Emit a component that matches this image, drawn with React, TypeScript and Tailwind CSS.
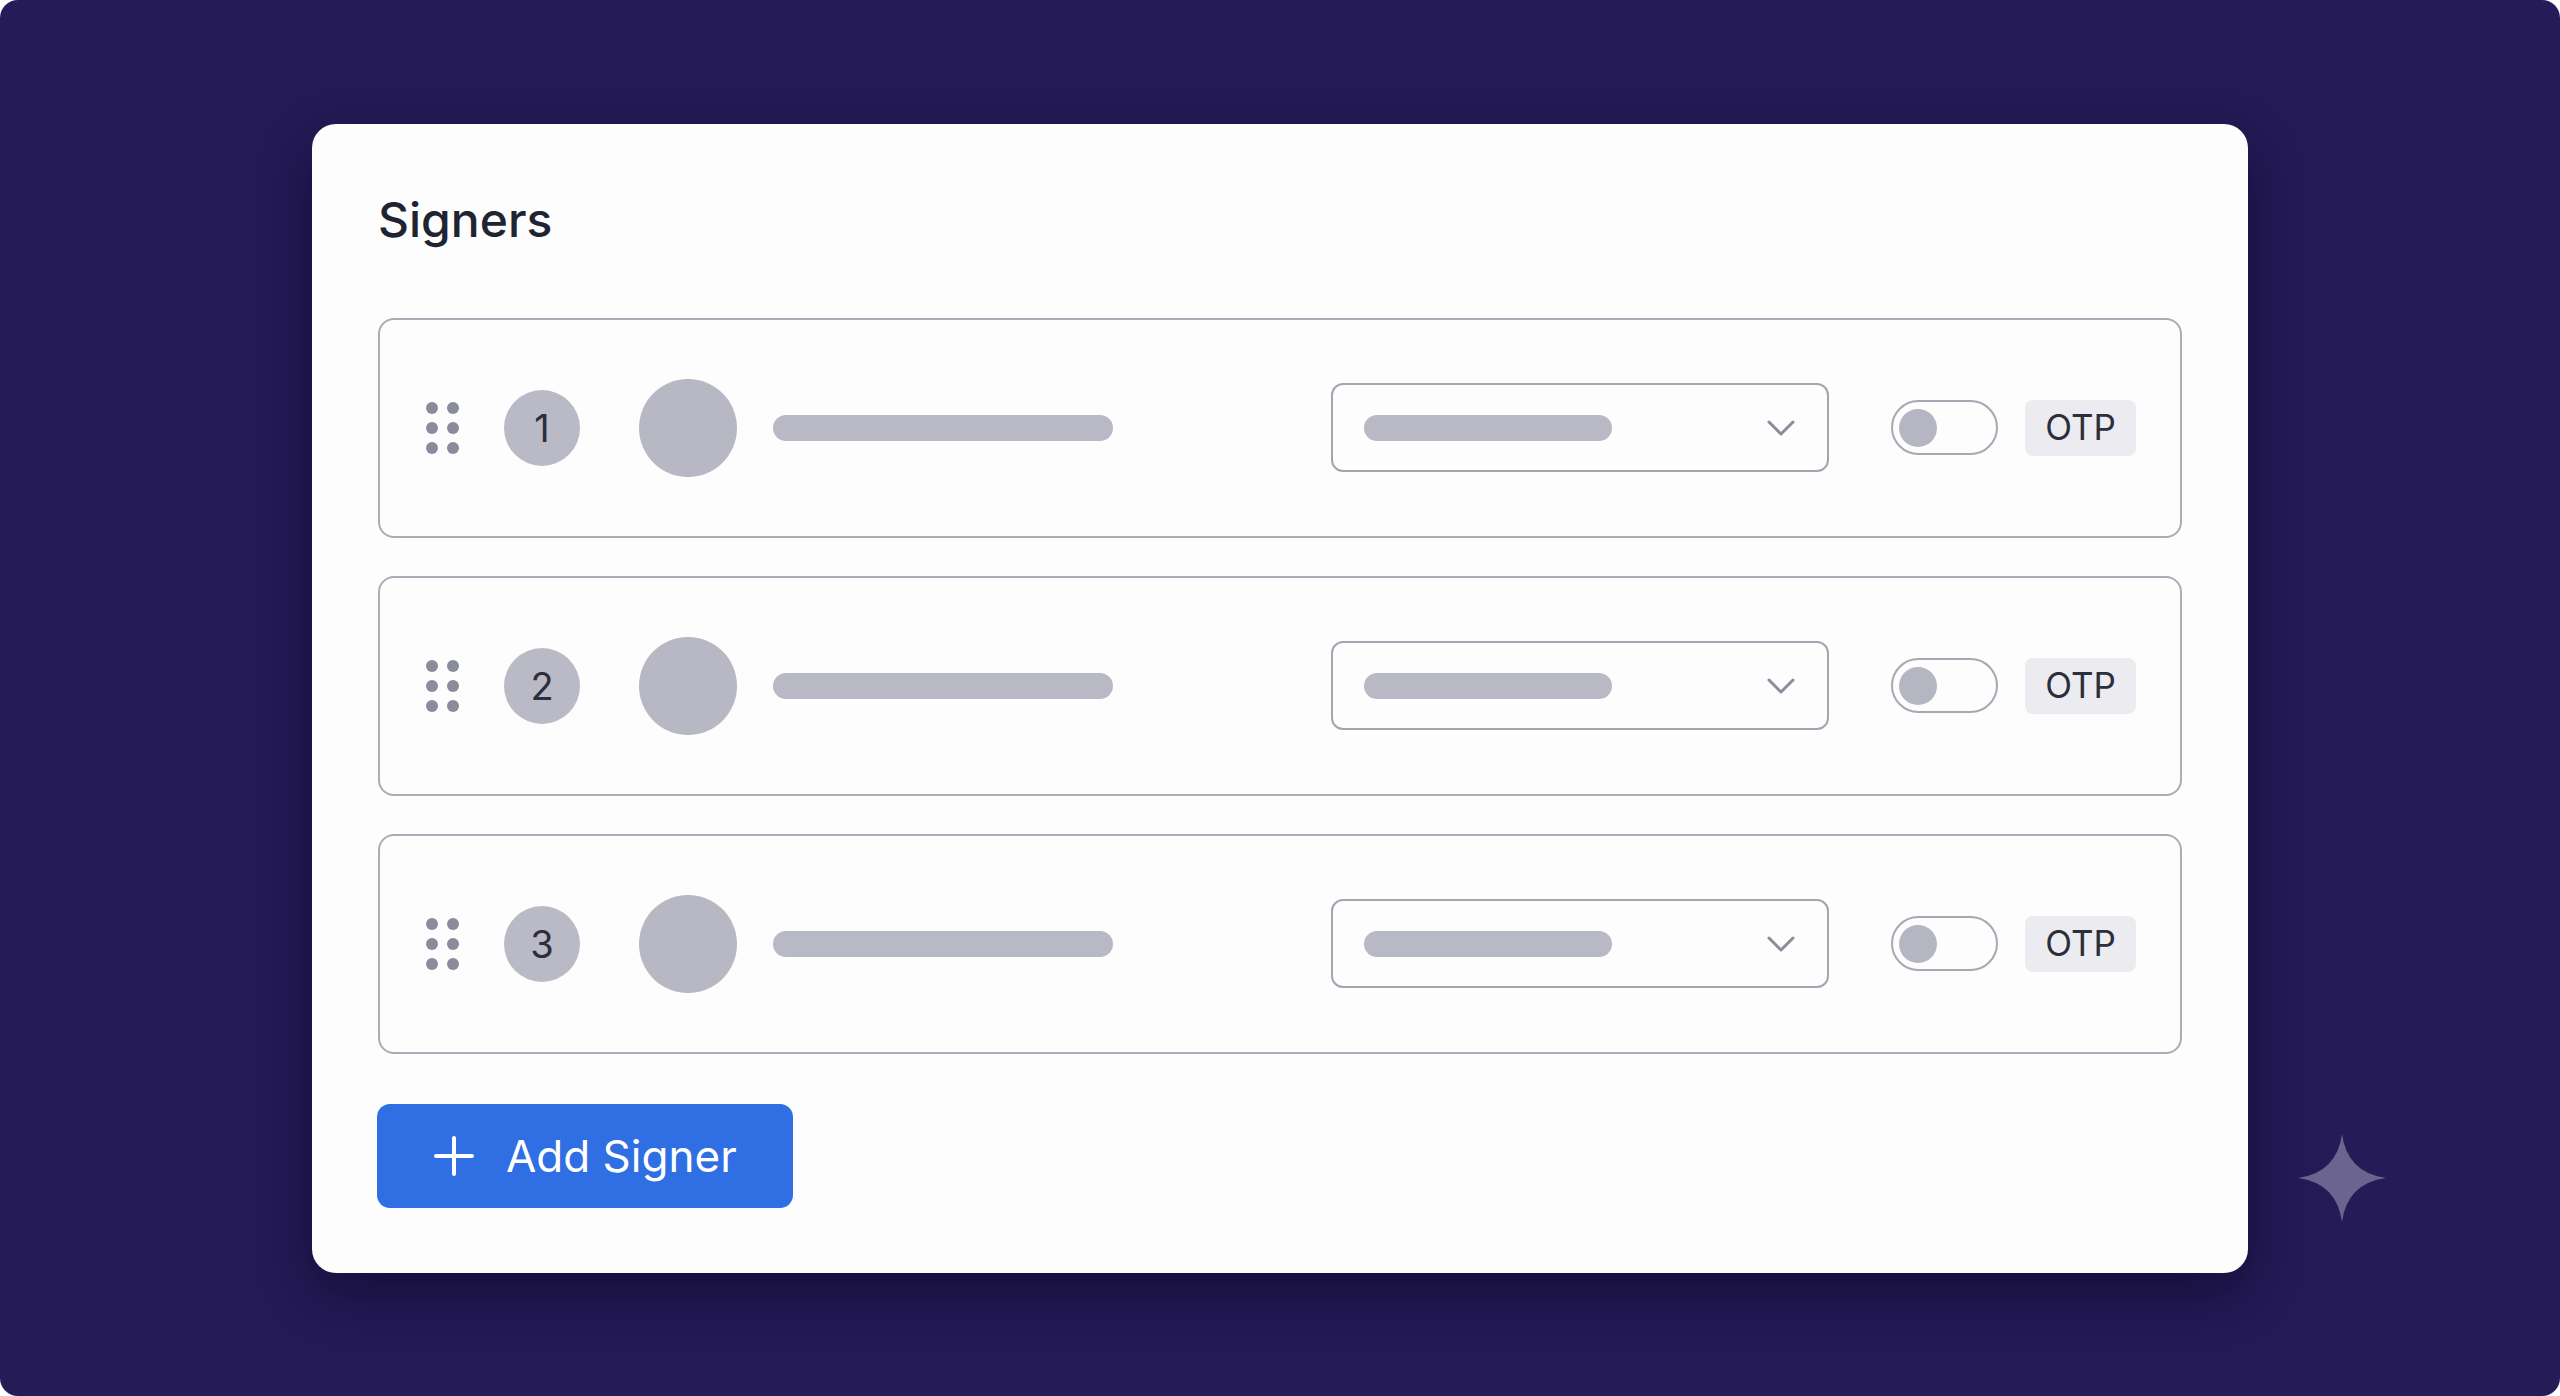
const signers = [1, 2, 3];

function DragHandle() {
  return (
    <div className="grid grid-cols-2 gap-x-[9px] gap-y-[8px]">
      {Array.from({ length: 6 }).map((_, i) => (
        <span key={i} className="w-[12px] h-[12px] rounded-full bg-[#8a8b9b]" />
      ))}
    </div>
  );
}

function SignerRow({ n }: { n: number }) {
  return (
    <div className="h-[220px] flex items-center justify-between pl-[46px] pr-[44px] border-2 border-[#aaacb7] rounded-[16px]">
      <div className="flex items-center">
        <DragHandle />
        {/* order number */}
        <div className="ml-[45px] w-[76px] h-[76px] rounded-full bg-[#b9bac6] flex items-center justify-center text-[38px] leading-none text-[#2b2e3c]">
          {n}
        </div>
        {/* avatar + name placeholder */}
        <div className="ml-[59px] w-[98px] h-[98px] rounded-full bg-[#b7b8c4]" />
        <div className="ml-[36px] w-[340px] h-[26px] rounded-full bg-[#b8b9c5]" />
      </div>
      <div className="flex items-center">
        {/* role select */}
        <div className="w-[498px] h-[89px] border-2 border-[#a3a5b0] rounded-[12px] flex items-center justify-between pl-[31px] pr-[32px]">
          <div className="w-[248px] h-[26px] rounded-full bg-[#b8b9c5]" />
          <svg width="28" height="16" viewBox="0 0 28 16" fill="none">
            <path d="M2 2 L14 14 L26 2" stroke="#8b8c99" strokeWidth="3" strokeLinecap="round" strokeLinejoin="round" />
          </svg>
        </div>
        {/* toggle */}
        <div className="ml-[62px] w-[107px] h-[55px] rounded-full border-2 border-[#a6a8b3] flex items-center pl-[6px]">
          <span className="w-[38px] h-[38px] rounded-full bg-[#b5b6c2]" />
        </div>
        <div className="ml-[27px] w-[111px] h-[56px] rounded-[8px] bg-[#ebebf0] flex items-center justify-center text-[35px] leading-none text-[#2b2e3b]">
          OTP
        </div>
      </div>
    </div>
  );
}

export default function App() {
  return (
    <div className="w-[2560px] h-[1396px] bg-white" style={{ fontFamily: 'Inter, "Noto Sans", sans-serif' }}>
      <div className="relative w-full h-full rounded-[18px] bg-[#241b57] flex items-center justify-center">
        <div className="w-[1936px] bg-[#fdfdfd] rounded-[24px] shadow-[0_20px_60px_rgba(8,4,30,0.55)] pt-[72px] pb-[65px] px-[66px]">
          <h1 className="text-[48px] leading-none h-[48px] text-[#1f2433] font-medium">Signers</h1>
          <div className="mt-[74px] flex flex-col gap-[38px]">
            {signers.map((n) => (
              <SignerRow key={n} n={n} />
            ))}
          </div>
          <button className="mt-[50px] -ml-px w-[416px] h-[104px] rounded-[13px] bg-[#2f6fe3] text-white flex items-center pl-[57px]">
            <svg width="40" height="40" viewBox="0 0 40 40" fill="none">
              <path d="M20 2 V38 M2 20 H38" stroke="white" strokeWidth="4" strokeLinecap="round" />
            </svg>
            <span className="ml-[32px] text-[44px] leading-none">Add Signer</span>
          </button>
        </div>
        {/* decorative sparkle */}
        <svg className="absolute left-[2298px] top-[1134px]" width="88" height="88" viewBox="0 0 100 100">
          <path d="M50 0 Q56 44 100 50 Q56 56 50 100 Q44 56 0 50 Q44 44 50 0 Z" fill="#6b6491" />
        </svg>
      </div>
    </div>
  );
}
